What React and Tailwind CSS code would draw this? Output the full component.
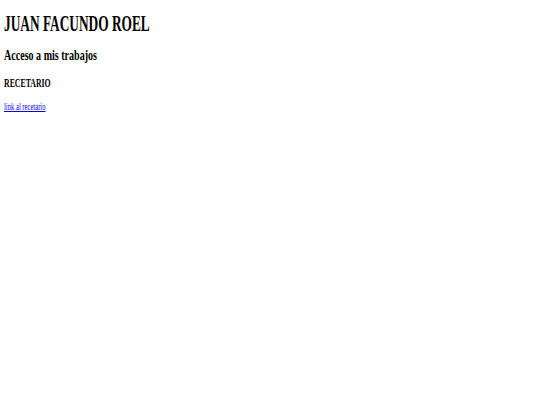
export default function App() {
  return (
    <div className="min-h-screen bg-white pl-[4px] pt-[12px] text-black [font-family:'Liberation_Serif',serif]">
      <h1 className="origin-left scale-x-[0.58] whitespace-nowrap text-[23px] leading-[23px] font-bold">
        JUAN FACUNDO ROEL
      </h1>
      <h2 className="mt-[13px] origin-left scale-x-[0.67] whitespace-nowrap text-[15px] leading-[15px] font-bold">
        Acceso a mis trabajos
      </h2>
      <h3 className="mt-[14px] origin-left scale-x-[0.65] whitespace-nowrap text-[12px] leading-[12px] font-bold">
        RECETARIO
      </h3>
      <div className="mt-[12px] origin-left scale-x-[0.63] whitespace-nowrap text-[10.5px] leading-[11px]">
        <a href="#" className="text-[#0000ee] underline">
          link al recetario
        </a>
      </div>
    </div>
  );
}
